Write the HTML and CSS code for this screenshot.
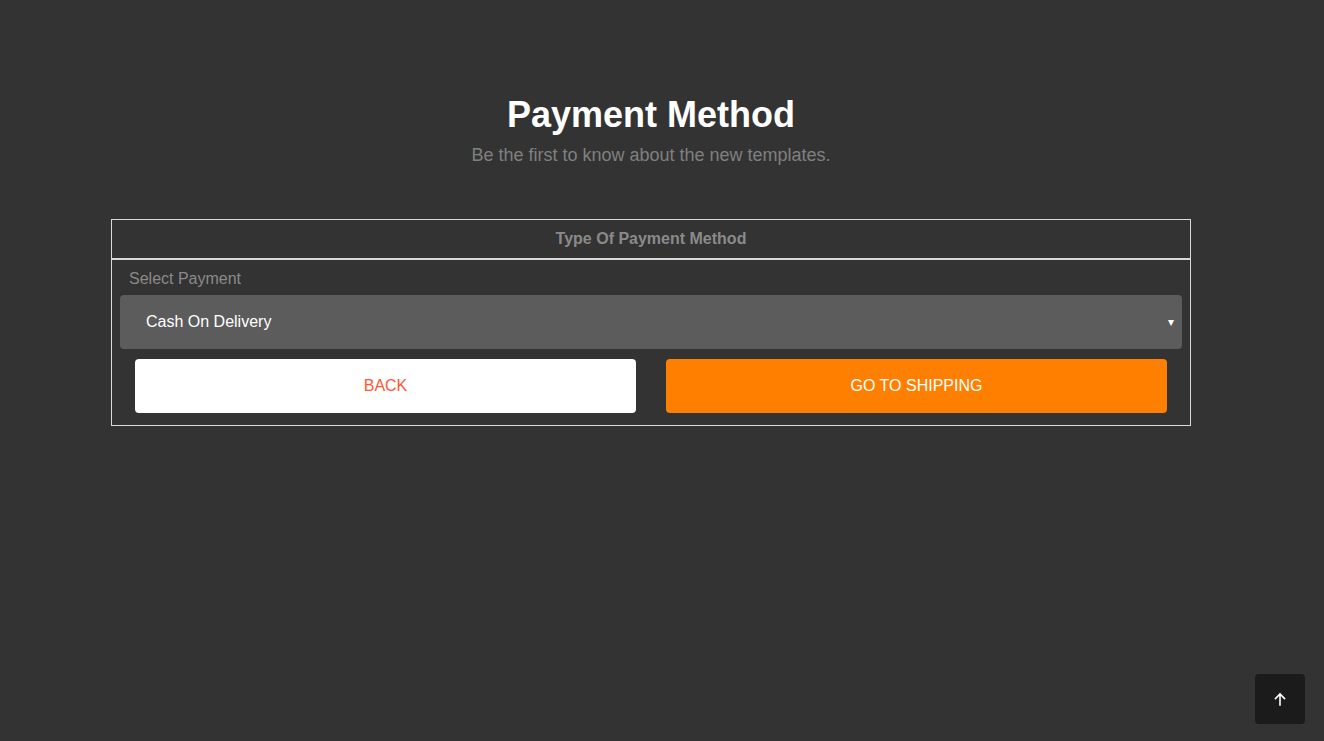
FILE: index.html
```html
<!DOCTYPE html>
<html lang="en">
<head>
<meta charset="utf-8">
<title>Payment Method</title>
<link rel="stylesheet" href="styles.css">
</head>
<body>
<main class="page">
  <header class="intro">
    <h1 class="title">Payment Method</h1>
    <p class="subtitle">Be the first to know about the new templates.</p>
  </header>
  <section class="panel">
    <div class="panel-head">Type Of Payment Method</div>
    <div class="panel-body">
      <label class="field-label" for="pay">Select Payment</label>
      <div class="select">
        <span class="select-value">Cash On Delivery</span>
        <span class="select-caret">&#9662;</span>
      </div>
      <div class="actions">
        <button class="btn btn-back">BACK</button>
        <button class="btn btn-go">GO TO SHIPPING</button>
      </div>
    </div>
  </section>
</main>
<button class="to-top" aria-label="Back to top">
  <svg width="14" height="14" viewBox="0 0 14 14" fill="none" stroke="#fff" stroke-width="1.6" stroke-linecap="square"><path d="M7 13V2M2.5 6.5L7 2l4.5 4.5"/></svg>
</button>
</body>
</html>
```
FILE: styles.css
```css
* { box-sizing: border-box; }
html, body { margin: 0; padding: 0; }
body {
  background: #333333;
  font-family: "Liberation Sans", Arial, sans-serif;
  height: 741px;
  overflow: hidden;
}
.page {
  width: 1080px;
  margin-left: 111px;
  padding-top: 93px;
}
.intro { text-align: center; }
.title {
  margin: 0;
  font-size: 36px;
  line-height: 44px;
  font-weight: 700;
  color: #ffffff;
}
.subtitle {
  margin: 0;
  margin-top: 6px;
  font-size: 18px;
  line-height: 24px;
  color: #808080;
}
.panel {
  margin-top: 52px;
  border: 1px solid #d9d9d9;
}
.panel-head {
  height: 40px;
  border-bottom: 2px solid #d9d9d9;
  text-align: center;
  font-size: 16px;
  font-weight: 700;
  color: #8a8a8a;
  line-height: 37px;
}
.panel-body {
  padding: 8px 8px 12px;
}
.field-label {
  display: block;
  padding-left: 9px;
  font-size: 16px;
  line-height: 22px;
  color: #8a8a8a;
  margin-bottom: 5px;
}
.select {
  height: 54px;
  background: #5c5c5c;
  border-radius: 4px;
  display: flex;
  align-items: center;
  justify-content: space-between;
  padding: 0 8px 0 26px;
  color: #ffffff;
  font-size: 16px;
}
.select-caret { font-size: 12px; }
.actions {
  display: flex;
  gap: 30px;
  padding: 10px 15px 0;
}
.btn {
  flex: 1;
  height: 54px;
  border: 0;
  border-radius: 4px;
  font-family: "Liberation Sans", Arial, sans-serif;
  font-size: 16px;
  cursor: pointer;
}
.btn-back { background: #ffffff; color: #ff5733; }
.btn-go { background: #ff8000; color: #ffffff; }
.to-top {
  position: fixed;
  left: 1255px;
  top: 674px;
  width: 50px;
  height: 50px;
  border: 0;
  border-radius: 4px;
  background: #1b1b1b;
  display: flex;
  align-items: center;
  justify-content: center;
  padding: 0;
}
```
